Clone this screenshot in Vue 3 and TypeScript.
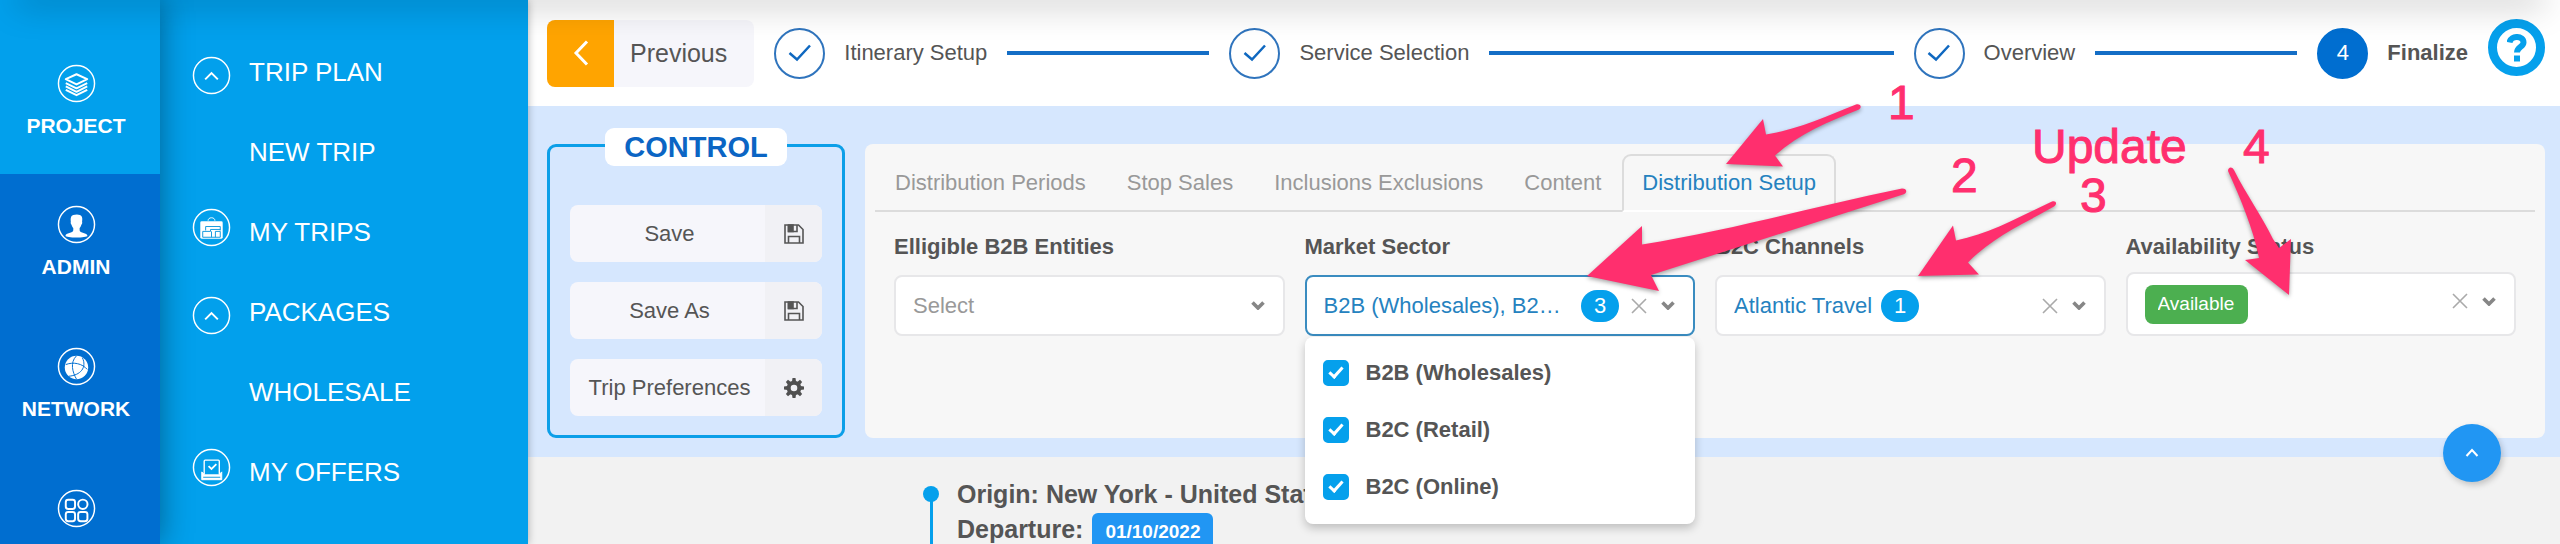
<script setup lang="ts">
import { ref } from 'vue'

interface RailItem { id: string; label: string }
interface MenuItem { label: string; icon?: 'chevron' | 'trips' | 'offers' }
interface Step { label: string; done: boolean; weight: number }

const rail: RailItem[] = [
  { id: 'project', label: 'PROJECT' },
  { id: 'admin', label: 'ADMIN' },
  { id: 'network', label: 'NETWORK' },
  { id: 'apps', label: '' },
]

const menu: MenuItem[] = [
  { label: 'TRIP PLAN', icon: 'chevron' },
  { label: 'NEW TRIP' },
  { label: 'MY TRIPS', icon: 'trips' },
  { label: 'PACKAGES', icon: 'chevron' },
  { label: 'WHOLESALE' },
  { label: 'MY OFFERS', icon: 'offers' },
]

const steps: Step[] = [
  { label: 'Itinerary Setup', done: true, weight: 1 },
  { label: 'Service Selection', done: true, weight: 2 },
  { label: 'Overview', done: true, weight: 1 },
  { label: 'Finalize', done: false, weight: 0 },
]

const controls = [
  { label: 'Save', icon: 'floppy' },
  { label: 'Save As', icon: 'floppy' },
  { label: 'Trip Preferences', icon: 'gear' },
]

const tabs = ['Distribution Periods', 'Stop Sales', 'Inclusions Exclusions', 'Content', 'Distribution Setup']
const activeTab = ref('Distribution Setup')

const sectors = ref([
  { label: 'B2B (Wholesales)', checked: true },
  { label: 'B2C (Retail)', checked: true },
  { label: 'B2C (Online)', checked: true },
])

const gearTeeth = [0, 45, 90, 135, 180, 225, 270, 315]
</script>

<template>
  <div class="shell">
    <nav class="rail" aria-label="Sections">
      <a v-for="(item, i) in rail" :key="item.id" href="#" class="rail-item" :class="{ active: i === 0 }" :aria-label="item.id">
        <svg class="ring" viewBox="0 0 40 40" fill="none" stroke="#fff" stroke-width="2">
          <circle cx="20" cy="20" r="18.5" stroke-width="1.5" />
          <g v-if="item.id === 'project'" stroke-linejoin="round">
            <path d="M20 10.5 31 15.5 20 21 9 15.5z" />
            <path d="M9 19.500l11 5.500 11-5.500M9 23l11 5.500L31 23M9 26.500L20 32l11-5.500" />
          </g>
          <g v-else-if="item.id === 'admin'" fill="#fff" stroke="none">
            <path d="M14.500 12c1-2.500 9.500-3.500 11 0 .8 2 .3 4 .2 5.500.6.800-.2 2.500-.8 3-.4 1.500-1 2.300-1.700 3v2.500c0 3 8 2.500 8 5.500 0 2.500-22.500 2.500-22.500 0 0-3 8-2.500 8-5.500v-2.500c-.7-.7-1.300-1.500-1.700-3-.6-.5-1.400-2.200-.8-3-.1-1.500-.5-3.500.3-5.500z" />
          </g>
          <g v-else-if="item.id === 'network'">
            <circle cx="20" cy="21" r="12" fill="#fff" stroke="none" />
            <path d="M9 18c8-3 17-1 22 5M20 9c-7 7-4 17 0 24M26 11c5 10-2 18-14 19" stroke="#006ed0" stroke-width="1" />
          </g>
          <g v-else stroke-width="2">
            <rect x="9" y="11" width="9.500" height="9.500" rx="2.500" />
            <circle cx="26.500" cy="15.700" r="4.800" />
            <rect x="9" y="23.500" width="9.500" height="9.500" rx="2.500" />
            <rect x="21.700" y="23.500" width="9.500" height="9.500" rx="2.500" />
          </g>
        </svg>
        <span>{{ item.label }}</span>
      </a>
    </nav>

    <nav class="menu" aria-label="Trips">
      <a v-for="item in menu" :key="item.label" href="#" class="menu-item" :class="item.icon">
        <span class="menu-icon">
          <svg v-if="item.icon" class="ring" viewBox="0 0 40 40" fill="none" stroke="#fff" stroke-width="2">
            <circle cx="20" cy="20" r="18.500" stroke-width="1.500" />
            <path v-if="item.icon === 'chevron'" d="M13.500 24 20 17.500 26.500 24" />
            <g v-else-if="item.icon === 'trips'">
              <path d="M16.500 13c0-4 7-4 7 0" stroke-width="1" />
              <rect x="8.500" y="13.500" width="23" height="18" rx="1.500" fill="#fff" stroke="none" />
              <path d="M14 23v-4h15v4M11 24h8v-2h10M11 24v6h18v-6h-5v6M20 24v6" stroke="#1199dd" stroke-width="1" />
            </g>
            <g v-else>
              <path d="M12.500 27V13.500a1 1 0 0 1 1-1h13.500a1 1 0 0 1 1 1V27" stroke-width="1.400" />
              <path d="M17 18.500l3 3 5-5" stroke-width="1.800" />
              <path d="M10 24.500v8h20.500v-8l-3 3H13z" fill="#fff" stroke-width="1" />
              <path d="M11.500 30h17.500" stroke="#1199dd" stroke-width="1" />
            </g>
          </svg>
        </span>
        <span>{{ item.label }}</span>
      </a>
    </nav>

    <main class="main">
      <header class="topbar">
        <button type="button" class="previous">
          <span class="previous-icon">
            <svg width="16" height="26" viewBox="0 0 16 26" fill="none" stroke="#fff" stroke-width="3"><path d="M14 1.500 3 13l11 11.500" /></svg>
          </span>
          <span class="previous-text">Previous</span>
        </button>
        <ol class="steps">
          <template v-for="(step, i) in steps" :key="step.label">
            <li class="step" :class="{ current: !step.done }">
              <span class="bullet">
                <svg v-if="step.done" width="24" height="18" viewBox="0 0 24 18" fill="none" stroke="#0f68c0" stroke-width="2.500"><path d="M1.500 9 9 15.500 22 1.500" /></svg>
                <template v-else>{{ i + 1 }}</template>
              </span>
              {{ step.label }}
            </li>
            <li v-if="step.weight" class="track" :class="{ long: step.weight === 2 }" aria-hidden="true"></li>
          </template>
        </ol>
        <button type="button" class="help" aria-label="Help">
          <svg width="20" height="28" viewBox="0 0 20 28" fill="none" stroke="#05a0ec" stroke-width="6">
            <path d="M2.500 8.500C4 .8 16.500 1.500 16.500 8.500c0 4.500-6.500 4.500-6.500 10" />
            <path d="M10 21.500v6" />
          </svg>
        </button>
      </header>

      <section class="band">
        <section class="control" aria-labelledby="control-title">
          <h2 id="control-title">CONTROL</h2>
          <button v-for="c in controls" :key="c.label" type="button" class="action">
            <span class="action-text">{{ c.label }}</span>
            <span class="action-icon">
              <svg v-if="c.icon === 'floppy'" width="20" height="20" viewBox="0 0 20 20" fill="none" stroke="#555" stroke-width="1.600">
                <path d="M1 1h13.500L19 5.500V19H1zM4.500 19v-6.500h11V19M4.500 1v6.500h8.500V1" />
                <path d="M4.500 1h4.500v6.500H4.500z" fill="#555" />
              </svg>
              <svg v-else width="20" height="20" viewBox="-10 -10 20 20">
                <circle r="5.300" fill="none" stroke="#505050" stroke-width="4" />
                <path v-for="a in gearTeeth" :key="a" d="M-2-6.500-1.500-10h3L2-6.500z" fill="#505050" :transform="`rotate(${a})`" />
              </svg>
            </span>
          </button>
        </section>

        <section class="panel">
          <div class="tabs" role="tablist">
            <button v-for="t in tabs" :key="t" type="button" role="tab" class="tab" :class="{ selected: t === activeTab }" :aria-selected="t === activeTab" @click="activeTab = t">{{ t }}</button>
          </div>

          <div class="fields">
            <div class="field">
              <label for="entities">Elligible B2B Entities</label>
              <div class="box">
                <select id="entities" class="value placeholder"><option>Select</option></select>
                <span class="tools"><svg class="chev" viewBox="0 0 14 9"><path d="M1.500 1.500 7 7l5.500-5.500" /></svg></span>
              </div>
            </div>

            <div class="field">
              <label for="sector">Market Sector</label>
              <div class="box open">
                <select id="sector" class="value"><option>B2B (Wholesales), B2C (Retail), B2C (Online)</option></select>
                <span class="count">3</span>
                <span class="tools">
                  <button type="button" class="clear" aria-label="Clear market sector"><svg viewBox="0 0 16 16"><path d="M1 1l14 14M15 1 1 15" /></svg></button>
                  <svg class="chev" viewBox="0 0 14 9"><path d="M1.500 1.500 7 7l5.500-5.500" /></svg>
                </span>
                <div class="options">
                  <label v-for="s in sectors" :key="s.label" class="option">
                    <input v-model="s.checked" type="checkbox" />
                    {{ s.label }}
                  </label>
                </div>
              </div>
            </div>

            <div class="field">
              <label for="channels">B2C Channels</label>
              <div class="box">
                <select id="channels" class="value"><option>Atlantic Travel</option></select>
                <span class="count">1</span>
                <span class="tools">
                  <button type="button" class="clear" aria-label="Clear channels"><svg viewBox="0 0 16 16"><path d="M1 1l14 14M15 1 1 15" /></svg></button>
                  <svg class="chev" viewBox="0 0 14 9"><path d="M1.500 1.500 7 7l5.500-5.500" /></svg>
                </span>
              </div>
            </div>

            <div class="field">
              <label for="status">Availability Status</label>
              <div class="box tall">
                <select id="status" class="value tag"><option>Available</option></select>
                <span class="tools">
                  <button type="button" class="clear" aria-label="Clear status"><svg viewBox="0 0 16 16"><path d="M1 1l14 14M15 1 1 15" /></svg></button>
                  <svg class="chev" viewBox="0 0 14 9"><path d="M1.500 1.500 7 7l5.500-5.500" /></svg>
                </span>
              </div>
            </div>
          </div>
        </section>
      </section>

      <section class="timeline">
        <div class="stop">
          <p>Origin: New York - United States</p>
          <p>Departure: <span class="date">01/10/2022</span></p>
        </div>
      </section>
    </main>

    <button type="button" class="to-top" aria-label="Back to top">
      <svg width="14" height="10" viewBox="0 0 14 10" fill="none" stroke="#fff" stroke-width="2"><path d="M1.500 8 7 2l5.500 6" /></svg>
    </button>

    <div class="top-shade"></div>

    <svg class="notes">
      <g class="arrows">
        <path d="M1726 164 1763 119l3 15.500c32-5 60-18 90-30 5-1 6 3 3 5-30 12-60 24-84 46l8 11z" />
        <path d="M1587 276 1642 226v18.500c88-14 172-38 260-56 6 0 5 5 1 6L1651 275l8 16z" />
        <path d="M1918 276 1953 225.500l3 15c34-7 64-24 96-39 5-1 5 3 2 5-30 17-62 31-86 56l11 12z" />
        <path d="M2289 295 2245 260l14-2c-6-30-18-58-31-87 0-4 4-5 6-1 12 24 28 46 39 69l6 9 12-9z" />
      </g>
      <g class="captions">
        <text x="1888" y="119">1</text>
        <text x="1951" y="192">2</text>
        <text x="2080" y="212">3</text>
        <text x="2243" y="163">4</text>
        <text x="2032" y="163">Update</text>
      </g>
    </svg>
  </div>
</template>

<style>
body { margin: 0; }
</style>

<style scoped>
.shell {
  position: relative;
  display: flex;
  height: 100vh;
  overflow: hidden;
  background: #f2f2f2;
  color: #555;
  font: 22px/28px "Liberation Sans", Arial, sans-serif;
}
.shell *, .shell *::after { box-sizing: border-box; }
button { font: inherit; color: inherit; border: 0; padding: 0; background: none; cursor: pointer; }
a { color: #fff; text-decoration: none; }
h2, p, ol { margin: 0; padding: 0; }

.rail {
  flex: none;
  width: 160px;
  z-index: 2;
  background: #006ed0;
  box-shadow: 0 0 30px rgba(0, 0, 0, 0.4);
}
.rail-item {
  display: flex;
  flex-direction: column;
  align-items: center;
  gap: 11px;
  height: 142px;
  padding: 31px 8px 0 0;
  font-size: 21px;
  font-weight: bold;
  line-height: 24px;
}
.rail-item.active { height: 174px; padding-top: 64px; background: #02a0ec; }
.ring { display: block; flex: none; width: 39px; height: 39px; }

.menu {
  flex: none;
  width: 368px;
  z-index: 1;
  padding-top: 32px;
  background: #02a0ec;
  box-shadow: 0 0 8px rgba(0, 0, 0, 0.3);
}
.menu-item {
  display: flex;
  align-items: center;
  gap: 18px;
  height: 80px;
  padding-left: 32px;
  font-size: 26px;
}
.menu-icon { width: 39px; }
.chevron .menu-icon { padding-top: 6px; }
.trips .menu-icon, .offers .menu-icon { padding-bottom: 10px; }

.main { flex: 1; min-width: 0; }

.topbar {
  display: flex;
  align-items: center;
  gap: 20px;
  height: 106px;
  padding: 0 15px 0 19px;
  background: #fff;
}
.previous {
  display: flex;
  flex: none;
  height: 67px;
  border-radius: 8px;
  overflow: hidden;
  background: #f6f6fb;
  font-size: 25px;
}
.previous-icon { display: flex; align-items: center; justify-content: center; width: 67px; height: 67px; background: #ffa400; }
.previous-text { padding: 0 27px 0 16px; line-height: 67px; }
.steps { display: flex; flex: 1; align-items: center; gap: 20px; list-style: none; }
.step { display: flex; align-items: center; gap: 19px; white-space: nowrap; }
.step.current { font-weight: bold; }
.bullet {
  display: flex;
  align-items: center;
  justify-content: center;
  width: 51px;
  height: 51px;
  border: 2px solid #2f74bd;
  border-radius: 50%;
}
.current .bullet { background: #006ed0; border-color: #006ed0; color: #fff; font-weight: normal; }
.track { flex: 1; height: 4px; background: #146ec6; }
.track.long { flex: 2; }
.help {
  display: flex;
  flex: none;
  align-items: center;
  justify-content: center;
  align-self: flex-start;
  width: 57px;
  height: 57px;
  margin-top: 19px;
  border: 9px solid #05a0ec;
  border-radius: 50%;
  background: #fff;
}

.band {
  display: flex;
  gap: 20px;
  padding: 38px 15px 19px 19px;
  background: #d6e7fe;
}
.control {
  position: relative;
  display: flex;
  flex: none;
  flex-direction: column;
  gap: 20px;
  width: 298px;
  padding: 58px 20px 19px;
  border: 3px solid #0c9fe8;
  border-radius: 9px;
}
.control h2 {
  position: absolute;
  top: -19px;
  left: 0;
  right: 0;
  width: fit-content;
  margin: 0 auto;
  padding: 0 19px;
  border-radius: 9px;
  background: #fff;
  color: #0b65c4;
  font-size: 29px;
  line-height: 38px;
}
.action { display: flex; height: 57px; border-radius: 8px; overflow: hidden; background: #f6f6fb; }
.action-text { flex: 1; padding-left: 4px; line-height: 57px; white-space: nowrap; }
.action-icon { display: flex; align-items: center; justify-content: center; width: 57px; height: 57px; background: #f1f1f5; }

.panel { flex: 1; min-width: 0; padding: 10px; border-radius: 8px; background: #f7f7f7; }
.tabs { display: flex; gap: 1px; border-bottom: 2px solid #dcdcdc; }
.tab {
  height: 58px;
  margin-bottom: -2px;
  padding: 0 18px;
  border: 2px solid transparent;
  border-radius: 9px 9px 0 0;
  color: #999;
  white-space: nowrap;
}
.tab.selected { border-color: #dcdcdc #dcdcdc #fff; background: #f7f7f7; color: #2582bf; }

.fields { display: grid; grid-template-columns: repeat(4, minmax(0, 1fr)); gap: 20px; padding: 21px 19px 0; }
.field > label { display: block; font-weight: bold; }
.box {
  position: relative;
  display: flex;
  align-items: center;
  height: 61px;
  margin-top: 14px;
  padding: 0 18px 0 17px;
  border: 2px solid #e7e7e9;
  border-radius: 8px;
  background: #fff;
}
.box.open { border-color: #3a8cc0; }
.box.tall { height: 64px; margin-top: 11px; }
.value {
  appearance: none;
  min-width: 0;
  height: 32px;
  margin: 0;
  padding: 0;
  border: 0;
  outline: 0;
  background: none;
  color: #2582bf;
  font: inherit;
  text-overflow: ellipsis;
  overflow: hidden;
  white-space: nowrap;
}
.value.placeholder { color: #999; }
.value.tag { height: 39px; padding: 0 13px; border-radius: 8px; background: #4caf50; color: #fff; font-size: 19px; }
.count {
  flex: none;
  width: 38px;
  height: 32px;
  margin-left: 8px;
  border-radius: 16px;
  background: #05a0ec;
  color: #fff;
  line-height: 32px;
  text-align: center;
}
.tools { display: flex; flex: none; align-items: center; gap: 14px; margin-left: auto; padding-left: 12px; }
.tall .tools { padding-bottom: 6px; }
.clear svg { display: block; width: 16px; height: 16px; stroke: #aaa; stroke-width: 1.6; }
.chev { width: 14px; height: 9px; fill: none; stroke: #868686; stroke-width: 3.6; }

.options {
  position: absolute;
  z-index: 3;
  top: calc(100% + 3px);
  left: -2px;
  right: -2px;
  padding: 7px 18px 9px;
  border-radius: 8px;
  background: #fff;
  box-shadow: 0 4px 10px rgba(0, 0, 0, 0.22);
}
.option { display: flex; align-items: center; gap: 17px; height: 57px; font-weight: bold; }
.option input {
  position: relative;
  appearance: none;
  width: 26px;
  height: 26px;
  margin: 0;
  border: 2px solid #05a0ec;
  border-radius: 5px;
  background: #fff;
}
.option input:checked { background: #05a0ec; }
.option input:checked::after {
  content: "";
  position: absolute;
  top: 2px;
  left: 7px;
  width: 8px;
  height: 14px;
  border: solid #fff;
  border-width: 0 3px 3px 0;
  transform: rotate(42deg);
}

.timeline { padding: 20px 0 0 395px; }
.stop { position: relative; padding-left: 34px; font-size: 25px; font-weight: bold; line-height: 35px; }
.stop::before { content: ""; position: absolute; top: 9px; left: 0; width: 16px; height: 16px; border-radius: 50%; background: #05a0ec; }
.stop::after { content: ""; position: absolute; top: 20px; bottom: -40px; left: 7px; width: 3px; background: #05a0ec; }
.date { display: inline-block; margin-left: 2px; padding: 0 13px; border-radius: 6px; background: #2196f3; color: #fff; font-size: 19px; line-height: 38px; }

.to-top {
  position: absolute;
  right: 59px;
  bottom: 62px;
  display: flex;
  align-items: center;
  justify-content: center;
  width: 58px;
  height: 58px;
  border-radius: 50%;
  background: #2196f3;
  box-shadow: 2px 3px 6px rgba(0, 0, 0, 0.2);
}
.top-shade { position: absolute; z-index: 4; top: -10px; left: 16px; right: 16px; height: 10px; box-shadow: 0 2px 34px rgba(0, 0, 0, 0.4); pointer-events: none; }
.notes { position: absolute; z-index: 5; top: 0; left: 0; width: 100%; height: 100%; pointer-events: none; fill: #ff2f6e; font-size: 48px; }
.arrows { filter: drop-shadow(0 2px 2px rgba(0, 0, 0, 0.35)); }
.captions { stroke: #ff2f6e; stroke-width: 1px; }
</style>
